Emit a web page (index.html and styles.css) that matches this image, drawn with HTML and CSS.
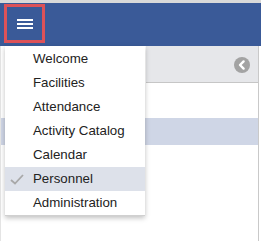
FILE: index.html
```html
<!DOCTYPE html>
<html>
<head>
<meta charset="utf-8">
<link rel="stylesheet" href="styles.css">
</head>
<body>
<div class="topstrip"></div>
<header class="navbar">
  <button class="menu-btn" aria-label="Menu">
    <span class="bar"></span><span class="bar"></span><span class="bar"></span>
  </button>
</header>
<div class="content">
  <div class="left">
    <div class="spacer"></div>
    <div class="row-sel"></div>
  </div>
  <div class="right">
    <div class="panel-head">
      <svg class="back-icon" width="16" height="16" viewBox="0 0 16 16">
        <circle cx="8" cy="8" r="8" fill="#a3a3a3"/>
        <path d="M9.6 4.4 L6 8 L9.6 11.6" fill="none" stroke="#fff" stroke-width="2.4" stroke-linecap="round" stroke-linejoin="round"/>
      </svg>
    </div>
    <div class="panel-gap"></div>
    <div class="row-sel"></div>
  </div>
</div>
<ul class="menu">
  <li class="item">Welcome</li>
  <li class="item">Facilities</li>
  <li class="item">Attendance</li>
  <li class="item">Activity Catalog</li>
  <li class="item">Calendar</li>
  <li class="item active">
    <svg class="check" width="14" height="11" viewBox="0 0 14 11">
      <path d="M1 6 L5 9.5 L13 1" fill="none" stroke="#a8a8a8" stroke-width="1.8"/>
    </svg>Personnel</li>
  <li class="item">Administration</li>
</ul>
</body>
</html>
```
FILE: styles.css
```css
* { box-sizing: border-box; }
html, body { margin: 0; padding: 0; background: #fff; }
body {
  font-family: "Liberation Sans", Arial, sans-serif;
  width: 261px;
  height: 241px;
  overflow: hidden;
  position: relative;
}
.topstrip { height: 3px; background: #d9d9d9; }
.navbar {
  height: 43px;
  background: #3a5a98;
  padding: 1px 0 0 4px;
}
.menu-btn {
  width: 41px;
  height: 39px;
  border: 3px solid #dd5258;
  background: transparent;
  padding: 0;
  display: flex;
  flex-direction: column;
  align-items: center;
  justify-content: center;
  gap: 2px;
}
.bar {
  display: block;
  width: 16px;
  height: 2px;
  background: #fff;
}
.content {
  display: flex;
  height: 195px;
}
.left { width: 146px; border-left: 1px solid #e4e4e4; }
.spacer { height: 72px; }
.row-sel { height: 27px; background: #cfd6e6; }
.right {
  flex: 1;
  border-right: 1px solid #c9c9c9;
  margin-right: 2px;
}
.panel-head {
  height: 37px;
  background: #e6e7ea;
  border-bottom: 1px solid #c6c6c6;
  display: flex;
  align-items: center;
  justify-content: flex-end;
  padding-right: 8px;
}
.back-icon { display: block; margin-top: 2px; }
.panel-gap { height: 35px; }
.menu {
  position: absolute;
  left: 5px;
  top: 46px;
  width: 140px;
  margin: 0;
  padding: 1px 0 0;
  list-style: none;
  background: #fff;
  border-bottom: 1px solid #d0d0d0;
  box-shadow: 0 2px 5px rgba(0,0,0,0.25);
}
.item {
  height: 24px;
  line-height: 24px;
  font-size: 13.3px;
  color: #222;
  padding-left: 28px;
  position: relative;
}
.item.active { background: #dde1ea; }
.check {
  position: absolute;
  left: 5px;
  top: 7px;
}
```
